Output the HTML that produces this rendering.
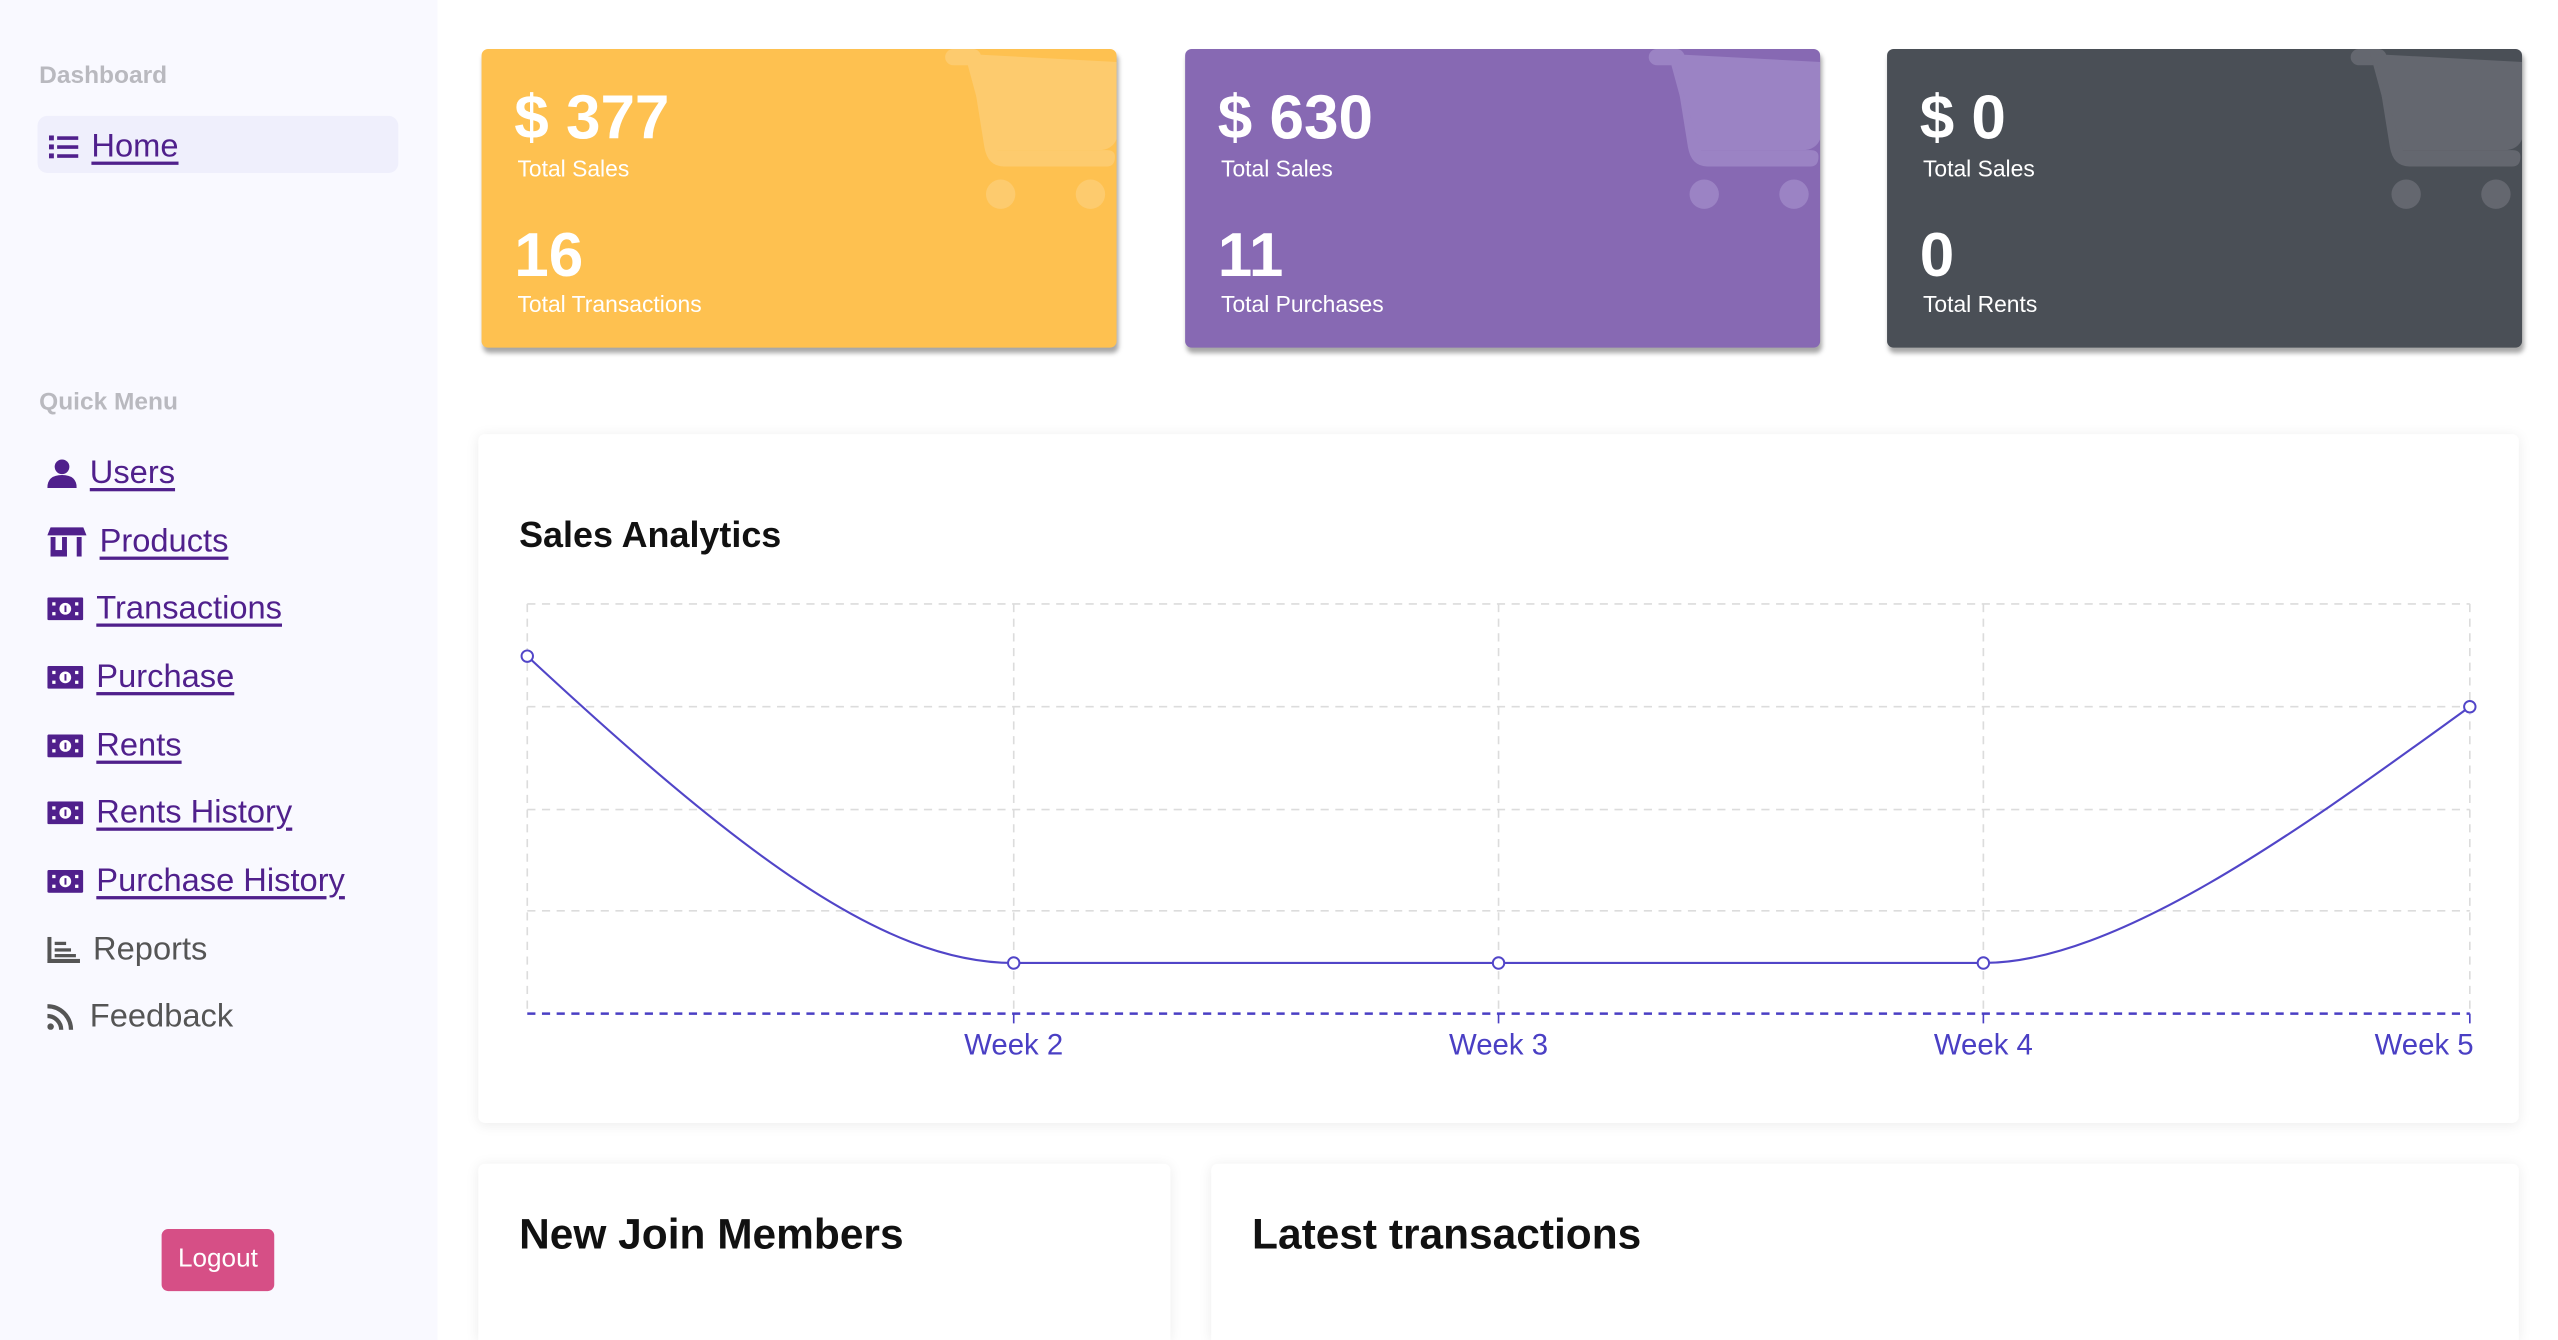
<!DOCTYPE html>
<html><head><meta charset="utf-8">
<style>
html,body{margin:0;padding:0;width:2558px;height:1340px;overflow:hidden;background:#fff;font-family:"Liberation Sans",sans-serif;}
#clip{position:relative;width:2558px;height:1340px;overflow:hidden;}
#s{position:absolute;left:0;top:0;width:1567px;height:821px;overflow:hidden;transform-origin:0 0;transform:scale(1.6324,1.6322);}
.a{position:absolute;}
.side{left:0;top:0;width:268px;height:821px;background:#f9f9ff;}
.hd{color:#b9b9bf;font-weight:bold;font-size:15px;}
.mi{left:29px;font-size:20px;color:#50208c;display:flex;align-items:center;height:26px;}
.mi span{text-decoration:underline;text-decoration-thickness:1.5px;text-underline-offset:3px;}
.mi svg{margin-right:8px}
.g{color:#555;}
.g span{text-decoration:none}
.card{top:30px;width:389px;height:183px;border-radius:4px;box-shadow:1px 3px 3px rgba(0,0,0,.35);overflow:hidden;color:#fff;}
.big{position:absolute;left:20px;font-weight:bold;font-size:38px;}
.sm{position:absolute;left:22px;font-size:14px;}
.panel{background:#fff;box-shadow:0 1px 8px rgba(0,0,0,.08);border-radius:4px;}
</style></head><body>
<div id="clip">
<div id="s">
<div class="a side"></div>
<div class="a hd" style="left:24px;top:38px">Dashboard</div>
<div class="a" style="left:23px;top:71px;width:221px;height:35px;background:#efeffc;border-radius:6px"></div>
<div class="a mi" style="top:77px;left:30px"><svg width="18" height="16" viewBox="0 0 18 16"><g fill="#50208c"><rect x="0" y="1" width="3" height="3"/><rect x="0" y="6.5" width="3" height="3"/><rect x="0" y="12" width="3" height="3"/><rect x="5" y="1.5" width="13" height="2.2"/><rect x="5" y="7" width="13" height="2.2"/><rect x="5" y="12.5" width="13" height="2.2"/></g></svg><span>Home</span></div>
<div class="a hd" style="left:24px;top:238px">Quick Menu</div>

<div class="a mi" style="top:277px"><svg width="18" height="18" viewBox="0 0 18 18"><circle cx="9" cy="5" r="4.5" fill="#50208c"/><path d="M0 18 Q0 10 9 10 Q18 10 18 18Z" fill="#50208c"/></svg><span>Users</span></div>
<div class="a mi" style="top:319px"><svg width="24" height="18" viewBox="0 0 24 18"><path d="M2 0H22L24 5H0Z" fill="#50208c"/><rect x="2" y="6" width="3" height="12" fill="#50208c"/><rect x="2" y="14" width="10" height="4" fill="#50208c"/><rect x="9" y="6" width="3" height="12" fill="#50208c"/><rect x="18" y="6" width="3" height="12" fill="#50208c"/></svg><span>Products</span></div>
<div class="a mi" style="top:360px"><svg width="22" height="14" viewBox="0 0 22 14"><rect width="22" height="14" rx="1" fill="#50208c"/><circle cx="11" cy="7" r="3.6" fill="#fff"/><rect x="3" y="3" width="2" height="2" fill="#fff"/><rect x="3" y="9" width="2" height="2" fill="#fff"/><rect x="17" y="3" width="2" height="2" fill="#fff"/><rect x="17" y="9" width="2" height="2" fill="#fff"/><rect x="10.5" y="5" width="1.2" height="4" fill="#50208c"/></svg><span>Transactions</span></div>
<div class="a mi" style="top:402px"><svg width="22" height="14" viewBox="0 0 22 14"><rect width="22" height="14" rx="1" fill="#50208c"/><circle cx="11" cy="7" r="3.6" fill="#fff"/><rect x="3" y="3" width="2" height="2" fill="#fff"/><rect x="3" y="9" width="2" height="2" fill="#fff"/><rect x="17" y="3" width="2" height="2" fill="#fff"/><rect x="17" y="9" width="2" height="2" fill="#fff"/><rect x="10.5" y="5" width="1.2" height="4" fill="#50208c"/></svg><span>Purchase</span></div>
<div class="a mi" style="top:444px"><svg width="22" height="14" viewBox="0 0 22 14"><rect width="22" height="14" rx="1" fill="#50208c"/><circle cx="11" cy="7" r="3.6" fill="#fff"/><rect x="3" y="3" width="2" height="2" fill="#fff"/><rect x="3" y="9" width="2" height="2" fill="#fff"/><rect x="17" y="3" width="2" height="2" fill="#fff"/><rect x="17" y="9" width="2" height="2" fill="#fff"/><rect x="10.5" y="5" width="1.2" height="4" fill="#50208c"/></svg><span>Rents</span></div>
<div class="a mi" style="top:485px"><svg width="22" height="14" viewBox="0 0 22 14"><rect width="22" height="14" rx="1" fill="#50208c"/><circle cx="11" cy="7" r="3.6" fill="#fff"/><rect x="3" y="3" width="2" height="2" fill="#fff"/><rect x="3" y="9" width="2" height="2" fill="#fff"/><rect x="17" y="3" width="2" height="2" fill="#fff"/><rect x="17" y="9" width="2" height="2" fill="#fff"/><rect x="10.5" y="5" width="1.2" height="4" fill="#50208c"/></svg><span>Rents History</span></div>
<div class="a mi" style="top:527px"><svg width="22" height="14" viewBox="0 0 22 14"><rect width="22" height="14" rx="1" fill="#50208c"/><circle cx="11" cy="7" r="3.6" fill="#fff"/><rect x="3" y="3" width="2" height="2" fill="#fff"/><rect x="3" y="9" width="2" height="2" fill="#fff"/><rect x="17" y="3" width="2" height="2" fill="#fff"/><rect x="17" y="9" width="2" height="2" fill="#fff"/><rect x="10.5" y="5" width="1.2" height="4" fill="#50208c"/></svg><span>Purchase History</span></div>
<div class="a mi g" style="top:569px"><svg width="20" height="16" viewBox="0 0 20 16"><g fill="#555"><rect x="0" y="0" width="2.5" height="16"/><rect x="0" y="13.5" width="20" height="2.5"/><rect x="4.5" y="3" width="7" height="2"/><rect x="4.5" y="7" width="10" height="2"/><rect x="4.5" y="10.5" width="13" height="2"/></g></svg><span>Reports</span></div>
<div class="a mi g" style="top:610px"><svg width="18" height="16" viewBox="0 0 18 16"><circle cx="2" cy="14" r="2" fill="#555"/><path d="M0 7.5A8.5 8.5 0 0 1 8.5 16" stroke="#555" stroke-width="2.6" fill="none"/><path d="M0 1.5A14.5 14.5 0 0 1 14.5 16" stroke="#555" stroke-width="2.6" fill="none"/></svg><span>Feedback</span></div>

<div class="a" style="left:99px;top:753px;width:69px;height:38px;background:#d64f86;border-radius:4px;color:#fff;font-size:16px;line-height:38px;text-align:center">Logout</div>

<!-- cards -->
<div class="a card" style="left:295px;background:#fec150">
<svg class="a" style="left:0;top:0" width="389" height="183"><g fill="#fdcb6e"><rect x="284" y="0" width="22" height="10" rx="5"/><path d="M296 3 L390 8 L390 52 Q388 62 378 62 L312 62Z"/><path d="M300 10 L308 60 Q310 72 320 72 L383 72 Q388 72 388 66 Q388 62 383 62 L316 62Z"/><circle cx="318" cy="89" r="9"/><circle cx="373" cy="89" r="9"/></g></svg>
<div class="big" style="top:22px">$ 377</div><div class="sm" style="top:65px">Total Sales</div>
<div class="big" style="top:106px">16</div><div class="sm" style="top:148px">Total Transactions</div></div>
<div class="a card" style="left:726px;background:#8769b3">
<svg class="a" style="left:0;top:0" width="389" height="183"><g fill="#9b83c4"><rect x="284" y="0" width="22" height="10" rx="5"/><path d="M296 3 L390 8 L390 52 Q388 62 378 62 L312 62Z"/><path d="M300 10 L308 60 Q310 72 320 72 L383 72 Q388 72 388 66 Q388 62 383 62 L316 62Z"/><circle cx="318" cy="89" r="9"/><circle cx="373" cy="89" r="9"/></g></svg>
<div class="big" style="top:22px">$ 630</div><div class="sm" style="top:65px">Total Sales</div>
<div class="big" style="top:106px">11</div><div class="sm" style="top:148px">Total Purchases</div></div>
<div class="a card" style="left:1156px;background:#4a4f56">
<svg class="a" style="left:0;top:0" width="389" height="183"><g fill="#64676f"><rect x="284" y="0" width="22" height="10" rx="5"/><path d="M296 3 L390 8 L390 52 Q388 62 378 62 L312 62Z"/><path d="M300 10 L308 60 Q310 72 320 72 L383 72 Q388 72 388 66 Q388 62 383 62 L316 62Z"/><circle cx="318" cy="89" r="9"/><circle cx="373" cy="89" r="9"/></g></svg>
<div class="big" style="top:22px">$ 0</div><div class="sm" style="top:65px">Total Sales</div>
<div class="big" style="top:106px">0</div><div class="sm" style="top:148px">Total Rents</div></div>

<!-- chart -->
<div class="a panel" style="left:293px;top:266px;width:1250px;height:422px"></div>
<div class="a" style="left:318px;top:315px;font-size:22px;font-weight:bold;color:#111">Sales Analytics</div>
<svg class="a" style="left:0;top:0" width="1567" height="821">
<g stroke="#dcdcdc" stroke-dasharray="5,4" stroke-width="1" fill="none">
<path d="M323 370H1513M323 433H1513M323 496H1513M323 558H1513"/>
<path d="M323 370V621M621 370V621M918 370V621M1215 370V621M1513 370V621"/>
</g>
<path d="M323 621H1513" stroke="#4a3fc4" stroke-dasharray="5,4" stroke-width="1.5"/>
<path d="M621 621v6M918 621v6M1215 621v6M1513 621v6" stroke="#4a3fc4"/>
<path d="M323 402 C450 520 540 590 621 590 L1215 590 C1300 590 1420 500 1513 433" stroke="#5145c8" stroke-width="1.3" fill="none"/>
<g fill="#fff" stroke="#5145c8" stroke-width="1.2"><circle cx="323" cy="402" r="3.5"/><circle cx="621" cy="590" r="3.5"/><circle cx="918" cy="590" r="3.5"/><circle cx="1215" cy="590" r="3.5"/><circle cx="1513" cy="433" r="3.5"/></g>
<g fill="#4a3fc4" font-size="18" font-family="Liberation Sans, sans-serif" text-anchor="middle"><text x="621" y="646">Week 2</text><text x="918" y="646">Week 3</text><text x="1215" y="646">Week 4</text><text x="1485" y="646">Week 5</text></g>
</svg>

<div class="a panel" style="left:293px;top:713px;width:424px;height:108px;border-radius:4px 4px 0 0"></div>
<div class="a panel" style="left:742px;top:713px;width:801px;height:108px;border-radius:4px 4px 0 0"></div>
<div class="a" style="left:318px;top:741px;font-size:26px;font-weight:bold;color:#111">New Join Members</div>
<div class="a" style="left:767px;top:741px;font-size:26px;font-weight:bold;color:#111">Latest transactions</div>
</div>
</div>
</body></html>
